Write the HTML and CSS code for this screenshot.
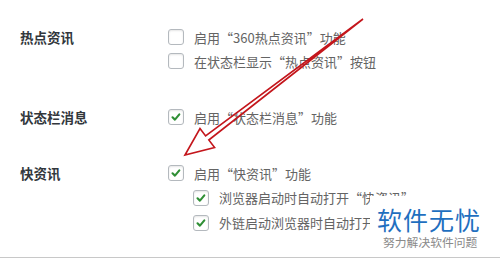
FILE: index.html
```html
<!DOCTYPE html>
<html lang="zh-CN">
<head>
<meta charset="utf-8">
<link rel="stylesheet" href="styles.css">
</head>
<body>
<div class="page">
  <section class="row first">
    <div class="label">热点资讯</div>
    <div class="opts">
      <div class="opt"><span class="cb"></span><span>启用“360热点资讯”功能</span></div>
      <div class="opt"><span class="cb"></span><span>在状态栏显示“热点资讯”按钮</span></div>
    </div>
  </section>
  <section class="row">
    <div class="label">状态栏消息</div>
    <div class="opts">
      <div class="opt"><span class="cb on"><svg viewBox="0 0 16 16"><path d="M4 8.3 L6.8 11 L11.8 5"/></svg></span><span>启用“状态栏消息”功能</span></div>
    </div>
  </section>
  <section class="row">
    <div class="label">快资讯</div>
    <div class="opts">
      <div class="opt"><span class="cb on"><svg viewBox="0 0 16 16"><path d="M4 8.3 L6.8 11 L11.8 5"/></svg></span><span>启用“快资讯”功能</span></div>
      <div class="opt sub"><span class="cb on"><svg viewBox="0 0 16 16"><path d="M4 8.3 L6.8 11 L11.8 5"/></svg></span><span>浏览器启动时自动打开“快资讯”</span></div>
      <div class="opt sub"><span class="cb on"><svg viewBox="0 0 16 16"><path d="M4 8.3 L6.8 11 L11.8 5"/></svg></span><span>外链启动浏览器时自动打开</span></div>
    </div>
  </section>
</div>
<div class="watermark">
  <div class="wm-title">软件无忧</div>
  <div class="wm-sub">努力解决软件问题</div>
</div>
<svg class="arrow" viewBox="0 0 500 263" width="500" height="263">
  <polygon points="185,155 200,128.5 205.6,136 363,19 208.8,140 214.6,147.5" />
</svg>
</body>
</html>
```
FILE: styles.css
```css
html, body {
  margin: 0;
  padding: 0;
  background: #fff;
}
body {
  width: 500px;
  height: 263px;
  overflow: hidden;
  position: relative;
  font-family: "Noto Sans CJK SC", "Noto Sans", sans-serif;
}
.page {
  border-bottom: 1px solid #c8c8c8;
  padding: 25px 0 0 20px;
  box-sizing: border-box;
  height: 258px;
}
.row {
  display: flex;
  margin-top: 32px;
}
.row.first {
  margin-top: 0;
}
.label {
  width: 148px;
  flex: none;
  font-size: 13.5px;
  font-weight: 700;
  color: #32373c;
  line-height: 24px;
}
.opts {
  display: flex;
  flex-direction: column;
}
.opt {
  display: flex;
  align-items: center;
  height: 24px;
  font-size: 13px;
  color: #646464;
  gap: 10px;
}
.opt.sub {
  height: 25px;
  padding-left: 25px;
}
.cb {
  width: 14px;
  height: 14px;
  border: 1px solid #b4b9be;
  border-radius: 3px;
  background: #fff;
  box-shadow: inset 0 1px 2px rgba(0,0,0,0.1);
  flex: none;
  display: flex;
}
.cb svg {
  width: 14px;
  height: 14px;
}
.cb svg path {
  fill: none;
  stroke: #2f8f35;
  stroke-width: 2.4;
  stroke-linecap: round;
  stroke-linejoin: round;
}
.watermark {
  position: absolute;
  left: 370px;
  top: 196px;
  width: 125px;
  height: 59px;
  background: #fff;
  display: flex;
  flex-direction: column;
  align-items: flex-start;
  padding: 10px 0 0 7px;
  box-sizing: border-box;
}
.wm-title {
  font-size: 25px;
  line-height: 26px;
  color: #1f6fbf;
  letter-spacing: 1px;
}
.wm-sub {
  font-size: 11.8px;
  line-height: 14px;
  margin-top: 3px;
  color: #8a8a8a;
  padding-left: 6px;
}
.arrow {
  position: absolute;
  left: 0;
  top: 0;
  pointer-events: none;
}
.arrow polygon {
  fill: none;
  stroke: #c4161c;
  stroke-width: 1.6;
  stroke-linejoin: miter;
}
```
